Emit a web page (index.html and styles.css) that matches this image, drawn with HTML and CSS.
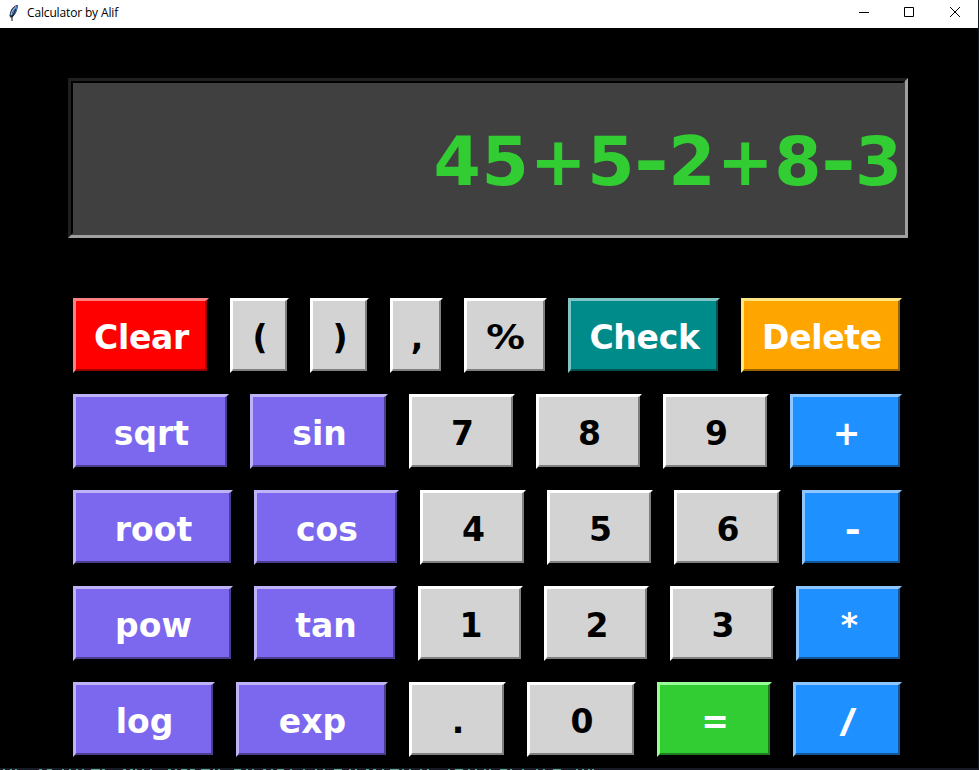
FILE: index.html
```
<!DOCTYPE html>
<html lang="en">
<head>
<meta charset="utf-8">
<title>Calculator by Alif</title>
<link rel="stylesheet" href="styles.css">
</head>
<body>
<div class="window">
  <header class="titlebar">
    <svg class="feather" width="12" height="18" viewBox="0 0 12 18"><path d="M10 1C6 1 2 5 1.500 12L3 14C7 12 9.500 7 10 1Z" fill="#20304c"/><path d="M9.500 1.500C7 3 4.500 6 3.500 12.500C7.500 10 9.500 6 9.500 1.500Z" fill="#4c84d0"/><path d="M8 2.500C5.500 4.500 3.500 7.500 3 11" fill="none" stroke="#c9ddf4"/><path d="M8 5L4 13L4 17" fill="none" stroke="#111" stroke-width="1"/></svg>
    <h1 class="title">Calculator by Alif</h1>
    <div class="controls">
      <svg width="10" height="10" viewBox="0 0 10 10"><path d="M0 5.500H10"/></svg>
      <svg width="10" height="10" viewBox="0 0 10 10"><path d="M.5.500H9.500V9.500H.5Z"/></svg>
      <svg width="10" height="10" viewBox="0 0 10 10"><path d="M0 0L10 10M10 0L0 10"/></svg>
    </div>
  </header>
  <main class="body">
    <div class="display"><div class="value">45<span class="plus">+</span>5<span class="minus">-</span>2<span class="plus">+</span>8<span class="minus">-</span>3</div></div>
    <div class="keys">
      <div class="row r1">
        <button class="key word red"><span>Clear</span></button><button class="key"><span>(</span></button><button class="key"><span>)</span></button><button class="key"><span>,</span></button><button class="key"><span><b class="wide">%</b></span></button><button class="key word teal"><span>Check</span></button><button class="key word orange"><span>Delete</span></button>
      </div>
      <div class="row r2">
        <button class="key violet"><span>sqrt</span></button><button class="key violet"><span>sin</span></button><button class="key"><span>7</span></button><button class="key"><span>8</span></button><button class="key"><span>9</span></button><button class="key blue"><span>+</span></button>
      </div>
      <div class="row r3">
        <button class="key violet"><span>root</span></button><button class="key violet"><span>cos</span></button><button class="key"><span>4</span></button><button class="key"><span>5</span></button><button class="key"><span>6</span></button><button class="key blue"><span><b class="wide">-</b></span></button>
      </div>
      <div class="row r4">
        <button class="key violet"><span>pow</span></button><button class="key violet"><span>tan</span></button><button class="key"><span>1</span></button><button class="key"><span>2</span></button><button class="key"><span>3</span></button><button class="key blue"><span>*</span></button>
      </div>
      <div class="row r5">
        <button class="key violet"><span>log</span></button><button class="key violet"><span>exp</span></button><button class="key"><span>.</span></button><button class="key"><span>0</span></button><button class="key green"><span>=</span></button><button class="key blue"><span><b class="slash">/</b></span></button>
      </div>
    </div>
  </main>
</div>
<svg class="backdrop" width="979" height="2" viewBox="0 0 979 2"><path d="M3 1.500h2m5 0h2m3 0h2m22 0h3m5 0h5m10 0h2m5 0h2m5 0h2m4 0h2m7 0h9m2 0h3m18 0h3m4 0h3m2 0h2m5 0h2m6 0h2m16 0h3m4 0h2m4 0h6m3 0h5m6 0h9m3 0h2m3 0h2m14 0h7m5 0h2m4 0h2m9 0h3m5 0h2m4 0h7m6 0h2m11 0h2m10 0h2m6 0h2m9 0h8m7 0h2m4 0h2m9 0h3m4 0h3m6 0h2m6 0h9m3 0h2m5 0h2m9 0h2m5 0h2m19 0h2m5 0h8m5 0h2m5 0h2m7 0h2m3 0h2m9 0h7m3 0h2m10 0h2m12 0h2m5 0h2m8 0h8m15 0h2m4 0h2m4 0h2m2 0h2"/></svg>
</body>
</html>
```
FILE: styles.css
```
* { box-sizing: border-box; }
body { margin: 0; height: 770px; overflow: hidden; background: #181b25; }
.window { width: 978px; height: 768px; background: #000; overflow: hidden; }
.titlebar { height: 28px; background: #fff; display: flex; align-items: center; padding: 0 19px 0 8px; }
.feather { margin: -3px 7px 0 0; }
.title { margin: -3px 0 0; font: 400 12px "Open Sans", "Noto Sans", sans-serif; letter-spacing: -0.150px; color: #000; }
.controls { margin: -4px 0 0 auto; display: flex; gap: 35px; }
.controls svg:last-child { margin-left: 1px; margin-right: -1px; }
.controls svg { fill: none; stroke: #000; stroke-width: 1; }
.body { padding: 50px 0 0; font-family: "DejaVu Sans", sans-serif; font-weight: 700; }
.display { width: 840px; height: 160px; margin-left: 68px; border: 3px solid; border-color: #202020 #a0a0a0 #a0a0a0 #202020; }
.value { height: 100%; background: #404040; border: 2px solid; border-color: #000 #404040 #404040 #000; display: flex; justify-content: flex-end; align-items: center; padding: 8px 0 0 0; font-size: 68px; line-height: 1; letter-spacing: 0.600px; color: #32cd32; }
.plus { width: 58px; letter-spacing: 0; text-align: center; }
.minus { width: 33px; letter-spacing: 0; transform: scaleX(1.25); text-align: center; }
.keys { margin: 60px 0 0 73px; display: grid; gap: 21px; }
.row { display: grid; gap: 21px; height: 75px; }
.r1 { grid-template-columns: 136px 59px 59px 53px 83px 152px 161px; }
.r2 { grid-template-columns: 156px 138px 106px 106px 106px 112px; }
.r3 { grid-template-columns: 160px 145px 106px 106px 107px 100px; }
.r4 { grid-template-columns: 160px 143px 105px 105px 105px 106px; }
.r5 { grid-template-columns: 142px 152px 97px 109px 115px 109px; }
.key { --face: #d3d3d3; --light: #fff; --dark: #808080; min-width: 0; margin: 0; padding: 0; display: flex; border: 2px solid; border-color: var(--light) #000 #000 var(--light); border-radius: 0; background: var(--face); color: #000; font: 700 33px/1 "DejaVu Sans", sans-serif; }
.key span { flex: 1; min-width: 0; height: 100%; display: flex; align-items: center; justify-content: center; padding: 5px 0 0 2px; border: solid; border-width: 1px 2px 2px 1px; border-color: var(--light) var(--dark) var(--dark) var(--light); }
.word { letter-spacing: -0.300px; }
.wide { transform: scaleX(1.170); }
.slash { transform: scaleX(1.4); }
.red, .teal, .orange, .violet, .blue, .green { color: #fff; }
.red { --face: #f00; --light: #ff8080; --dark: #990000; }
.teal { --face: #008b8b; --light: #80c5c5; --dark: #005353; }
.orange { --face: #ffa500; --light: #ffe680; --dark: #996300; }
.violet { --face: #7b68ee; --light: #bdb3f6; --dark: #4a3e8f; }
.blue { --face: #1e90ff; --light: #8ec7ff; --dark: #125699; }
.green { --face: #32cd32; --light: #98ff98; --dark: #1e7b1e; }
.backdrop { display: block; fill: none; stroke: #5fa894; stroke-width: 1; }
```
